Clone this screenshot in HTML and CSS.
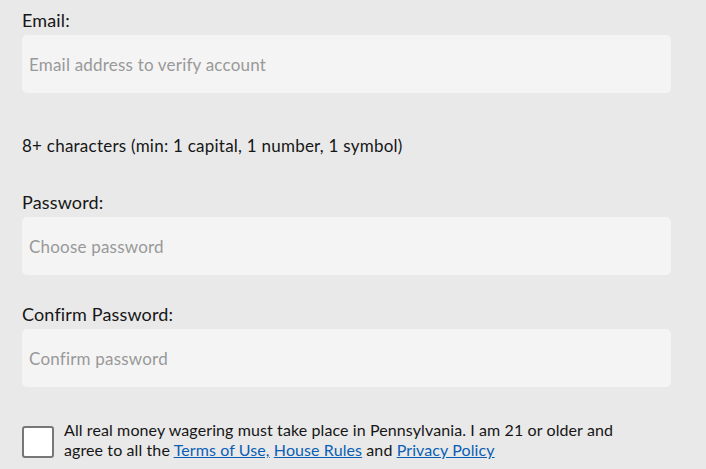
FILE: index.html
```html
<!DOCTYPE html>
<html lang="en">
<head>
  <meta charset="UTF-8" />
  <meta name="viewport" content="width=device-width, initial-scale=1.0"/>
  <title>Create Account</title>
  <link rel="stylesheet" href="styles.css">
</head>
<body>
  <form class="signup">
    <div class="field">
      <label for="email">Email:</label>
      <input type="email" id="email" placeholder="Email address to verify account" />
    </div>

    <p class="hint">8+ characters (min: 1 capital, 1 number, 1 symbol)</p>

    <div class="field">
      <label for="password">Password:</label>
      <input type="password" id="password" placeholder="Choose password" />
    </div>

    <div class="field confirm">
      <label for="confirm">Confirm Password:</label>
      <input type="password" id="confirm" placeholder="Confirm password" />
    </div>

    <div class="agree">
      <input type="checkbox" id="terms" class="check" />
      <label for="terms" class="agree-text">All real money wagering must take place in Pennsylvania. I am 21 or older and agree to all the <a href="#">Terms of Use,</a> <a href="#">House Rules</a> and <a href="#">Privacy Policy</a></label>
    </div>
  </form>
</body>
</html>
```

FILE: styles.css
```css
body {
  margin: 0;
  font-family: Lato, "Open Sans", sans-serif;
  font-size: 17px;
  line-height: 20px;
  color: #161616;
  background-color: #e9e9e9;
}
.signup {
  padding: 10px 35px 0 22px;
}
.field label {
  display: block;
  margin-bottom: 5px;
  font-size: 18px;
  letter-spacing: 0.15px;
}
.field input {
  display: block;
  width: 100%;
  height: 58px;
  box-sizing: border-box;
  padding: 0 7px;
  border: none;
  border-radius: 5px;
  background-color: #f4f4f4;
  font-family: inherit;
  font-size: 17px;
  letter-spacing: 0.2px;
  color: #161616;
  outline: none;
}
.field input::placeholder {
  color: #999;
}
.hint {
  margin: 43px 0 36px;
  letter-spacing: 0.24px;
}
.confirm {
  margin-top: 29px;
}
.agree {
  display: flex;
  gap: 10px;
  margin-top: 33px;
  padding-right: 40px;
}
.check {
  appearance: none;
  flex: none;
  width: 32px;
  height: 32px;
  margin: 6px 0 0;
  border: 2px solid #777;
  border-radius: 3px;
  background: #fff;
}
.agree-text {
  font-size: 16px;
  letter-spacing: 0.1px;
}
.agree-text a {
  color: #0a5fb4;
}
```
